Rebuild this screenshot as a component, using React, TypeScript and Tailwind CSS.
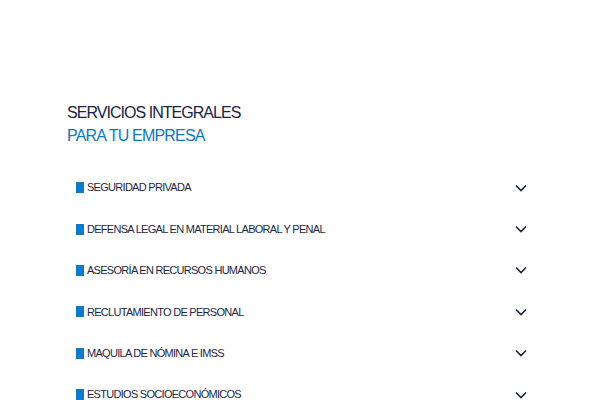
import React from "react";

const items = [
  "SEGURIDAD PRIVADA",
  "DEFENSA LEGAL EN MATERIAL LABORAL Y PENAL",
  "ASESORÍA EN RECURSOS HUMANOS",
  "RECLUTAMIENTO DE PERSONAL",
  "MAQUILA DE NÓMINA E IMSS",
  "ESTUDIOS SOCIOECONÓMICOS",
];

export default function App() {
  return (
    <div className="w-[600px] h-[400px] overflow-hidden bg-white" style={{ fontFamily: '"Liberation Sans", Arial, sans-serif' }}>
      <div className="pl-[67px] pt-[101px]">
        <h1 className="text-[16px] leading-[23px] tracking-[-0.06em] text-[#1b2340]">SERVICIOS INTEGRALES</h1>
        <h2 className="text-[16px] leading-[23px] tracking-[-0.05em] text-[#1078c2]">PARA TU EMPRESA</h2>
      </div>
      <div className="mt-[20px] ml-[76px] w-[452px]">
        {items.map((t) => (
          <div key={t} className="h-[41.4px] flex items-center justify-between">
            <div className="flex items-center">
              <span className="w-[8px] h-[11px] bg-[#0d7acb] mr-[3px]" />
              <span className="text-[11px] tracking-[-0.065em] text-[#1e2744]">{t}</span>
            </div>
            <svg width="12" height="8" viewBox="0 0 12 8" className="mr-[1px]">
              <path d="M1 1.5 L6 6.5 L11 1.5" fill="none" stroke="#1b2340" strokeWidth="1.6" />
            </svg>
          </div>
        ))}
      </div>
    </div>
  );
}
